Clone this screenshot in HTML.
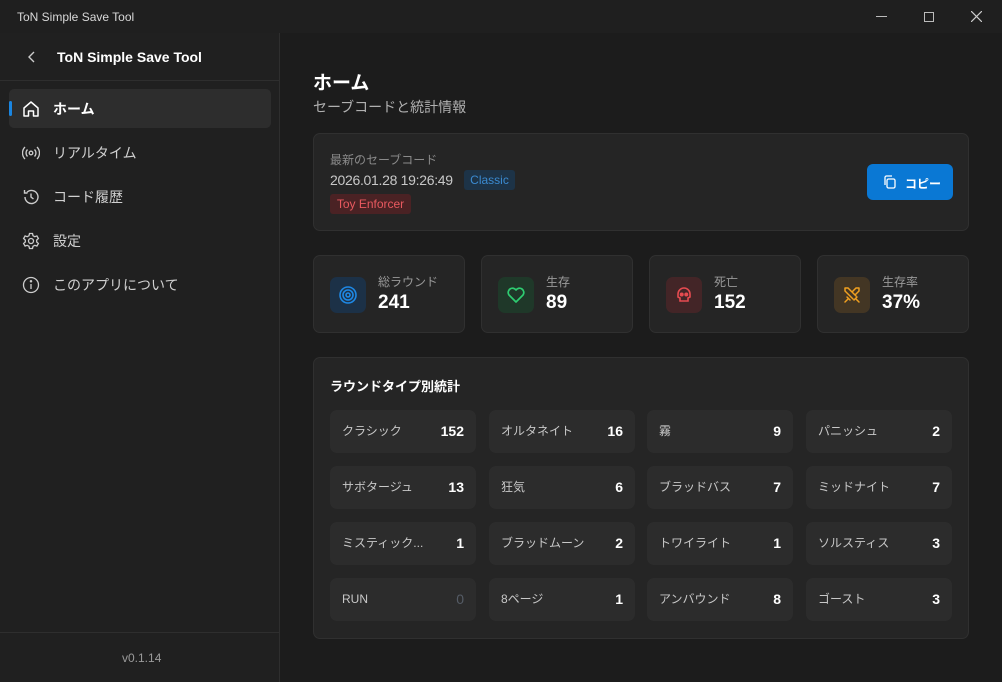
<!DOCTYPE html>
<html><head><meta charset="utf-8"><style>
*{box-sizing:border-box;margin:0;padding:0}
body{width:1002px;height:682px;background:#1c1c1c;font-family:"Liberation Sans","Noto Sans CJK JP",sans-serif;color:#fff;position:relative;overflow:hidden}
.abs{position:absolute}
.tb{left:0;top:0;width:1002px;height:33px;background:#1f1f1f}
.side{left:0;top:33px;width:280px;height:649px;background:#202020;border-right:1px solid #2e2e2e}
.nav{position:absolute;left:9px;width:262px;height:39px;border-radius:5px;display:flex;align-items:center;font-size:14px;color:#d0d0d0}
.nav svg{position:absolute;left:13px}
.nav span{position:absolute;left:44px}
.card{position:absolute;background:#252525;border:1px solid #303030;border-radius:7px}
.stat{top:255px;width:152px;height:78px}
.ic{position:absolute;left:16px;top:21px;width:36px;height:36px;border-radius:7px;display:flex;align-items:center;justify-content:center}
.sl{position:absolute;left:64px;top:17px;font-size:12px;color:#9a9a9a}
.sv{position:absolute;left:64px;top:36px;font-size:19px;font-weight:bold}
.cell{position:absolute;width:146px;height:43px;background:#2c2c2c;border-radius:7px;font-size:12px;color:#c8c8c8;line-height:43px}
.cell .l{position:absolute;left:12px;top:0}
.cell .v{position:absolute;right:12px;top:0;font-size:14px;font-weight:bold;color:#fff}
</style></head><body>
<div class="abs tb"></div>
<div class="abs" style="left:17px;top:10px;font-size:12px;color:#d8d8d8">ToN Simple Save Tool</div>
<div class="abs" style="left:876px;top:16px;width:11px;height:1px;background:#bbb"></div>
<div class="abs" style="left:924px;top:12px;width:10px;height:10px;border:1px solid #bbb"></div>
<svg class="abs" style="left:971px;top:11px" width="11" height="11"><path d="M0 0L11 11M11 0L0 11" stroke="#ccc" stroke-width="1.2"/></svg>
<div class="abs side"></div>
<svg class="abs" style="left:27px;top:51px" width="10" height="12"><path d="M7 1L2 6L7 11" stroke="#ccc" stroke-width="1.4" fill="none"/></svg>
<div class="abs" style="left:57px;top:49px;font-size:14px;font-weight:bold">ToN Simple Save Tool</div>
<div class="abs" style="left:0;top:80px;width:280px;height:1px;background:#2e2e2e"></div>
<div class="nav" style="top:89px;background:#2d2d2d;color:#fff;font-weight:bold"><div style="position:absolute;left:0;top:12px;width:3px;height:15px;background:#1a85e0;border-radius:2px"></div>
<svg width="18" height="18" viewBox="0 0 18 18"><path d="M2 8L9 2L16 8V16H11.5V11H6.5V16H2Z" stroke="#fff" stroke-width="1.5" fill="none" stroke-linejoin="round"/></svg><span>ホーム</span></div>
<div class="nav" style="top:133px"><svg width="18" height="18" viewBox="0 0 18 18" fill="none" stroke="#ccc" stroke-width="1.3"><circle cx="9" cy="9" r="1.8"/><path d="M5.5 5.5a5 5 0 0 0 0 7M12.5 5.5a5 5 0 0 1 0 7M3 3a8.5 8.5 0 0 0 0 12M15 3a8.5 8.5 0 0 1 0 12"/></svg><span>リアルタイム</span></div>
<div class="nav" style="top:177px"><svg width="18" height="18" viewBox="0 0 18 18" fill="none" stroke="#ccc" stroke-width="1.4"><path d="M3 9a6.5 6.5 0 1 0 2-4.7M2.5 2v3h3M9 5.5V9l2.5 2"/></svg><span>コード履歴</span></div>
<div class="nav" style="top:221px"><svg width="18" height="18" viewBox="0 0 18 18" fill="none" stroke="#ccc" stroke-width="1.3"><circle cx="9" cy="9" r="2.5"/><path d="M7.5 1.5h3l.5 2.2 1.8 1 2.1-.8 1.5 2.6-1.7 1.5v2l1.7 1.5-1.5 2.6-2.1-.8-1.8 1-.5 2.2h-3l-.5-2.2-1.8-1-2.1.8-1.5-2.6 1.7-1.5v-2L1.6 6.5l1.5-2.6 2.1.8 1.8-1z"/></svg><span>設定</span></div>
<div class="nav" style="top:265px"><svg width="18" height="18" viewBox="0 0 18 18" fill="none" stroke="#ccc" stroke-width="1.3"><circle cx="9" cy="9" r="7.5"/><path d="M9 8v5"/><circle cx="9" cy="5.3" r=".6" fill="#ccc"/></svg><span>このアプリについて</span></div>
<div class="abs" style="left:0;top:632px;width:280px;height:1px;background:#2e2e2e"></div>
<div class="abs" style="left:122px;top:651px;font-size:12px;color:#9a9a9a">v0.1.14</div>

<div class="abs" style="left:313px;top:68px;font-size:19px;font-weight:bold">ホーム</div>
<div class="abs" style="left:313px;top:97px;font-size:14px;color:#b0b0b0">セーブコードと統計情報</div>

<div class="card" style="left:313px;top:133px;width:656px;height:98px">
<div class="abs" style="left:16px;top:17px;font-size:12px;color:#8a8a8a">最新のセーブコード</div>
<div class="abs" style="left:16px;top:38px;font-size:14px;color:#c8c8c8;letter-spacing:-0.3px">2026.01.28 19:26:49</div>
<div class="abs" style="left:150px;top:36px;width:51px;height:20px;background:#1d3347;border-radius:3px;font-size:12px;color:#3b8ad0;text-align:center;line-height:20px">Classic</div>
<div class="abs" style="left:16px;top:60px;width:81px;height:20px;background:#4a2224;border-radius:3px;font-size:12px;color:#e8595f;text-align:center;line-height:20px">Toy Enforcer</div>
<div class="abs" style="left:553px;top:30px;width:86px;height:36px;background:#0a78d4;border-radius:6px;font-size:12px;font-weight:bold">
<svg class="abs" style="left:15px;top:10px" width="16" height="16" viewBox="0 0 16 16" fill="none" stroke="#fff" stroke-width="1.3"><rect x="5" y="5" width="8" height="9" rx="1.5"/><path d="M3 11V3.5A1.5 1.5 0 0 1 4.5 2H10"/></svg>
<span class="abs" style="left:38px;top:11px">コピー</span></div>
</div>

<div class="card stat" style="left:313px"><div class="ic" style="background:#1c3147"><svg width="20" height="20" viewBox="0 0 20 20" fill="none" stroke="#1e88e5" stroke-width="1.6"><circle cx="10" cy="10" r="8"/><circle cx="10" cy="10" r="5"/><circle cx="10" cy="10" r="2"/></svg></div><div class="sl">総ラウンド</div><div class="sv">241</div></div>
<div class="card stat" style="left:481px"><div class="ic" style="background:#1f3829"><svg width="20" height="20" viewBox="0 0 20 20" fill="none" stroke="#2ecc71" stroke-width="1.7"><path d="M10 17L3 10a4 4 0 0 1 7-5 4 4 0 0 1 7 5z" stroke-linejoin="round"/></svg></div><div class="sl">生存</div><div class="sv">89</div></div>
<div class="card stat" style="left:649px"><div class="ic" style="background:#432527"><svg width="20" height="20" viewBox="0 0 20 20" fill="none" stroke="#e64b50" stroke-width="1.6"><path d="M4 9a6 6 0 0 1 12 0v3l-2 1v3H6v-3l-2-1z"/><circle cx="7.7" cy="9.5" r="1.2" fill="#e64b50"/><circle cx="12.3" cy="9.5" r="1.2" fill="#e64b50"/></svg></div><div class="sl">死亡</div><div class="sv">152</div></div>
<div class="card stat" style="left:817px"><div class="ic" style="background:#433624"><svg width="20" height="20" viewBox="0 0 20 20" fill="none" stroke="#f0a020" stroke-width="1.5" stroke-linecap="round"><path d="M3 3h3l8 8M3 3v3l8 8M17 3h-3l-3.5 3.5M17 3v3l-3.5 3.5M5 12l3 3M15 12l-3 3M3 17l3-3M17 17l-3-3"/></svg></div><div class="sl">生存率</div><div class="sv">37%</div></div>

<div class="card" style="left:313px;top:357px;width:656px;height:282px">
<div class="abs" style="left:16px;top:18px;font-size:13px;font-weight:bold">ラウンドタイプ別統計</div>
</div>
<div class="cell" style="left:330px;top:410px"><span class="l">クラシック</span><span class="v">152</span></div>
<div class="cell" style="left:489px;top:410px"><span class="l">オルタネイト</span><span class="v">16</span></div>
<div class="cell" style="left:647px;top:410px"><span class="l">霧</span><span class="v">9</span></div>
<div class="cell" style="left:806px;top:410px"><span class="l">パニッシュ</span><span class="v">2</span></div>
<div class="cell" style="left:330px;top:466px"><span class="l">サボタージュ</span><span class="v">13</span></div>
<div class="cell" style="left:489px;top:466px"><span class="l">狂気</span><span class="v">6</span></div>
<div class="cell" style="left:647px;top:466px"><span class="l">ブラッドバス</span><span class="v">7</span></div>
<div class="cell" style="left:806px;top:466px"><span class="l">ミッドナイト</span><span class="v">7</span></div>
<div class="cell" style="left:330px;top:522px"><span class="l">ミスティック...</span><span class="v">1</span></div>
<div class="cell" style="left:489px;top:522px"><span class="l">ブラッドムーン</span><span class="v">2</span></div>
<div class="cell" style="left:647px;top:522px"><span class="l">トワイライト</span><span class="v">1</span></div>
<div class="cell" style="left:806px;top:522px"><span class="l">ソルスティス</span><span class="v">3</span></div>
<div class="cell" style="left:330px;top:578px"><span class="l">RUN</span><span class="v" style="color:#555c66;font-weight:normal">0</span></div>
<div class="cell" style="left:489px;top:578px"><span class="l">8ページ</span><span class="v">1</span></div>
<div class="cell" style="left:647px;top:578px"><span class="l">アンバウンド</span><span class="v">8</span></div>
<div class="cell" style="left:806px;top:578px"><span class="l">ゴースト</span><span class="v">3</span></div>
</body></html>
